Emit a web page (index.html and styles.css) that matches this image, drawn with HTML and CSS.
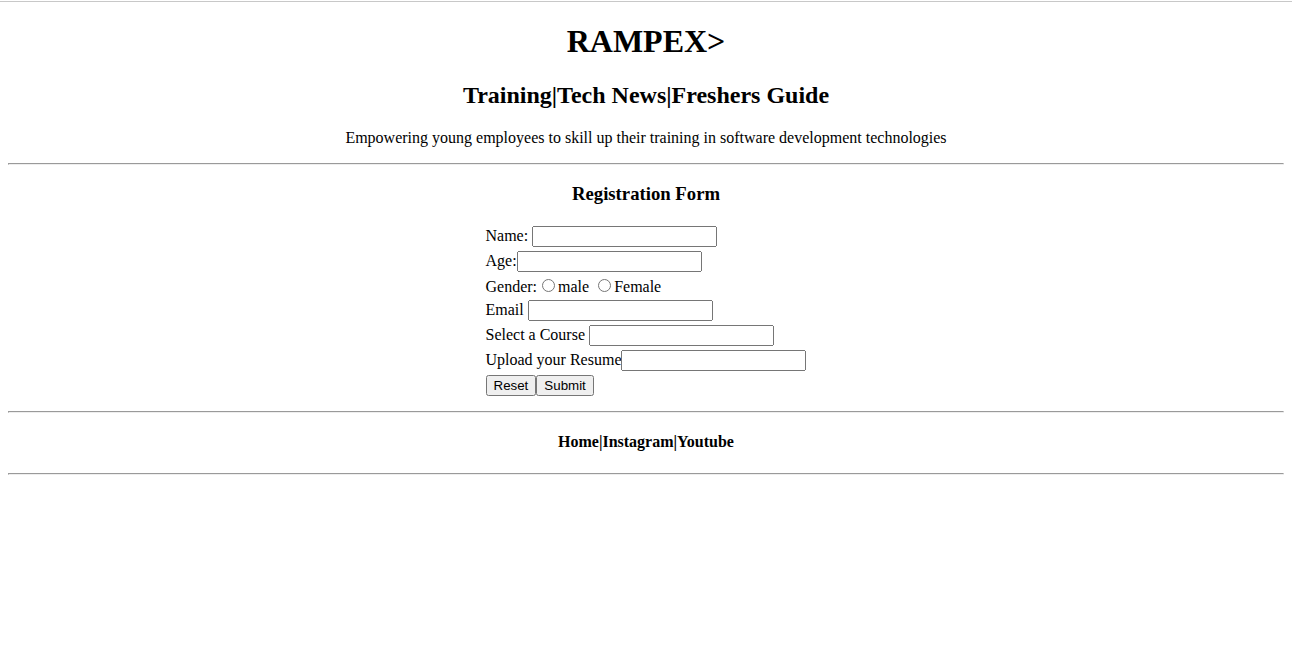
FILE: index.html
```html
<!DOCTYPE html>
<html lang="en">
<head>
    <meta charset="UTF-8">
    <title>RAMPEX</title>
    <link rel="stylesheet" href="styles.css">
</head>
<body>
    <header class="header">
        <h1>RAMPEX&gt;</h1>
        <h2>Training|Tech News|Freshers Guide</h2>
        <p>Empowering young employees to skill up their training in software development technologies</p>
    </header>
    <hr>
    <section class="register">
        <h3>Registration Form</h3>
        <form class="form">
            <div class="row"><label>Name: <input type="text"></label></div>
            <div class="row"><label>Age:<input type="text"></label></div>
            <div class="row">Gender:<input type="radio" name="gender">male <input type="radio" name="gender">Female</div>
            <div class="row"><label>Email <input type="text"></label></div>
            <div class="row"><label>Select a Course <input type="text"></label></div>
            <div class="row"><label>Upload your Resume<input type="text"></label></div>
            <div class="row"><input type="reset" value="Reset"><input type="submit" value="Submit"></div>
        </form>
    </section>
    <hr>
    <footer class="footer">
        <h4>Home|Instagram|Youtube</h4>
    </footer>
    <hr>
</body>
</html>
```

FILE: styles.css
```css
html {
    padding-top: 1px;
}

body {
    font-family: "Liberation Serif", serif;
    margin: 0;
    padding: 0 8px 8px;
    border-top: 1px solid #c8c8c8;
}

.header,
.register,
.footer {
    text-align: center;
}

.register h3 {
    margin-top: 18.2px;
}

.form {
    display: inline-block;
    text-align: left;
    padding: 0 0 5px;
}

.row {
    padding: 2px 0;
}

.footer h4 {
    margin: 20.3px 0 22.3px;
}
```
